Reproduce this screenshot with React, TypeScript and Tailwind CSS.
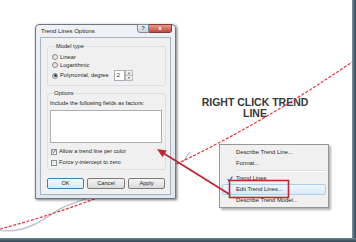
import React from 'react';

const Radio = ({ label, checked = false }: { label: string; checked?: boolean }) => (
  <div className="flex items-center gap-[2px] h-[8px]">
    <span className="w-[6px] h-[6px] rounded-full border border-[#8b8b8b] bg-gradient-to-br from-[#d4d4d4] to-[#fafafa] flex items-center justify-center">
      {checked && <span className="w-[3px] h-[3px] rounded-full bg-[#1f4674]" />}
    </span>
    <span>{label}</span>
  </div>
);

const Check = ({ label, checked = false }: { label: string; checked?: boolean }) => (
  <div className="flex items-center gap-[2px] h-[7px] pl-[1px]">
    <span className="w-[6px] h-[6px] border border-[#8e8f8f] bg-gradient-to-br from-[#dcdcdc] to-[#fbfbfb] flex items-center justify-center">
      {checked && (
        <svg width="5" height="5" viewBox="0 0 5 5">
          <path d="M0.6 2.6 L1.9 4 L4.4 0.6" fill="none" stroke="#2a4d86" strokeWidth="1" />
        </svg>
      )}
    </span>
    <span>{label}</span>
  </div>
);

const Btn = ({ label, w, isDefault = false }: { label: string; w: string; isDefault?: boolean }) => (
  <div
    className={`${w} h-[11px] rounded-[2px] border flex items-center justify-center ${
      isDefault
        ? 'border-[#3c7fb1] bg-gradient-to-b from-[#f0f8fe] to-[#d6edfb]'
        : 'border-[#7a7a7a] bg-gradient-to-b from-[#f5f5f5] to-[#dadada]'
    }`}
  >
    {label}
  </div>
);

const MenuItem = ({ label, checked = false, hot = false }: { label: string; checked?: boolean; hot?: boolean }) => (
  <div
    className={`flex items-center h-[11px] rounded-[2px] border ${
      hot ? 'border-[#aacff0] bg-gradient-to-b from-[#f0f6fd] to-[#dae9f9]' : 'border-transparent'
    }`}
  >
    <div className="w-[13px] flex justify-center">
      {checked && (
        <svg width="6" height="6" viewBox="0 0 6 6">
          <path d="M0.6 3.2 L2.2 5 L5.4 0.6" fill="none" stroke="#2c5bb0" strokeWidth="1.1" />
        </svg>
      )}
    </div>
    <span>{label}</span>
  </div>
);

export default function App() {
  return (
    <div className="w-[356px] h-[242px] flex flex-col bg-white overflow-hidden font-['Liberation_Sans',Arial,sans-serif] text-[#1e1e1e]">
      <div className="flex-1 flex">
        <div className="flex-1 relative">
          {/* annotation */}
          <div className="absolute left-[196px] top-[97px] w-[118px] text-center text-[10.5px] leading-[11px] font-bold text-[#383838]">
            RIGHT CLICK TREND
            <br />
            LINE
          </div>

          {/* chart lines behind the dialog */}
          <svg className="absolute inset-0" width="352" height="238">
            <path
              d="M0 230 C 10 232, 20 231, 33 225 S 55 211, 64 207 S 84 200, 100 193 L 150 175"
              fill="none"
              stroke="#b9c6d3"
              strokeWidth="1.5"
            />
            <path d="M183 162 L190 152" fill="none" stroke="#aebdcc" strokeWidth="1.3" />
            <path d="M0 229 Q 176 183, 352 62" fill="none" stroke="#e8323c" strokeWidth="1.2" strokeDasharray="3 1.6" />
          </svg>

          {/* dialog */}
          <div className="absolute left-[35px] top-[24px] w-[141px] h-[175px] rounded-t-[4px] border border-[#6e7783] bg-gradient-to-b from-[#eef2f6] to-[#e0e7ee] shadow-[1px_1px_3px_rgba(0,0,0,0.55)] flex flex-col px-[4px] pb-[3px]">
            <div className="h-[12px] flex items-start justify-between">
              <span className="pl-[1px] h-[12px] flex items-center text-[6px] text-[#1a1a1a]">Trend Lines Options</span>
              <div className="flex -mt-[1px] -mr-[1px]">
                <div className="w-[12px] h-[9px] rounded-bl-[3px] border border-[#7d8a98] bg-gradient-to-b from-[#eef2f6] to-[#c9d3de] flex items-center justify-center text-[6px] font-bold text-[#4a5868]">
                  ?
                </div>
                <div className="w-[23px] h-[9px] rounded-br-[3px] border border-l-0 border-[#8a3a33] bg-gradient-to-b from-[#e49a8f] to-[#c4473b] flex items-center justify-center text-[6px] font-bold text-white">
                  x
                </div>
              </div>
            </div>

            <div className="flex-1 border border-[#a9b3be] bg-[#f0f0f0] flex flex-col pl-[6px] pr-[4px] pt-[5px] text-[5.7px] leading-[7px]">
              <fieldset className="border border-[#d5dfe5] rounded-[3px] pl-[4px] pt-[3px] pb-[4px]">
                <legend className="ml-[3px] px-[1px] leading-[7px]">Model type</legend>
                <Radio label="Linear" />
                <Radio label="Logarithmic" />
                <div className="flex items-center h-[11px] mt-[1px]">
                  <Radio label="Polynomial, degree" checked />
                  <div className="ml-[5px] w-[11px] h-[11px] border border-[#abadb3] bg-white flex items-center pl-[2px]">2</div>
                  <div className="w-[8px] h-[11px] flex flex-col">
                    <div className="flex-1 border border-[#b8b8b8] bg-gradient-to-b from-[#f6f6f6] to-[#e2e2e2] flex items-center justify-center">
                      <span className="w-0 h-0 border-l-[1.5px] border-r-[1.5px] border-b-[2px] border-l-transparent border-r-transparent border-b-[#5a6a7a]" />
                    </div>
                    <div className="flex-1 border border-t-0 border-[#b8b8b8] bg-gradient-to-b from-[#f6f6f6] to-[#e2e2e2] flex items-center justify-center">
                      <span className="w-0 h-0 border-l-[1.5px] border-r-[1.5px] border-t-[2px] border-l-transparent border-r-transparent border-t-[#5a6a7a]" />
                    </div>
                  </div>
                </div>
              </fieldset>

              <fieldset className="mt-[4px] border border-[#d5dfe5] rounded-[3px] pl-[2px] pr-[3px] pt-[3px] pb-[3px]">
                <legend className="ml-[3px] px-[1px] leading-[7px]">Options</legend>
                <div>Include the following fields as factors:</div>
                <div className="mt-[3px] h-[33px] border border-[#abadb3] bg-white" />
                <div className="mt-[5px]">
                  <Check label="Allow a trend line per color" checked />
                </div>
                <div className="mt-[4px]">
                  <Check label="Force y-intercept to zero" />
                </div>
              </fieldset>

              <div className="mt-[8px] flex gap-[3px]">
                <Btn label="OK" w="w-[37px]" isDefault />
                <Btn label="Cancel" w="w-[38px]" />
                <Btn label="Apply" w="w-[37px]" />
              </div>
            </div>
          </div>

          {/* context menu */}
          <div className="absolute left-[219px] top-[144px] w-[110px] h-[64px] border border-[#979797] bg-[#f0f0f0] shadow-[2px_2px_2px_rgba(0,0,0,0.3)] p-[2px] pt-[2px] text-[5.8px] text-[#1e1e1e]">
            <MenuItem label="Describe Trend Line..." />
            <MenuItem label="Format..." />
            <div className="h-[4px] flex flex-col justify-center pl-[14px]">
              <div className="border-t border-[#dcdcdc]" />
              <div className="border-t border-white" />
            </div>
            <MenuItem label="Trend Lines" checked />
            <MenuItem label="Edit Trend Lines..." hot />
            <MenuItem label="Describe Trend Model..." />
          </div>

          {/* red callout */}
          <svg className="absolute inset-0 pointer-events-none" width="352" height="238">
            <rect x="229.5" y="180.5" width="59" height="17" fill="none" stroke="#c4262e" strokeWidth="1.6" />
            <line x1="229" y1="194" x2="164" y2="153.5" stroke="#c4262e" strokeWidth="1.8" />
            <polygon points="157,149 166.7,150.4 162.5,157.2" fill="#c4262e" />
          </svg>
        </div>
        <div className="w-[4px] bg-gradient-to-r from-[#7f959e] to-[#2f4853]" />
      </div>
      <div className="h-[4px] bg-gradient-to-b from-[#6f8791] to-[#2c434d]" />
    </div>
  );
}
